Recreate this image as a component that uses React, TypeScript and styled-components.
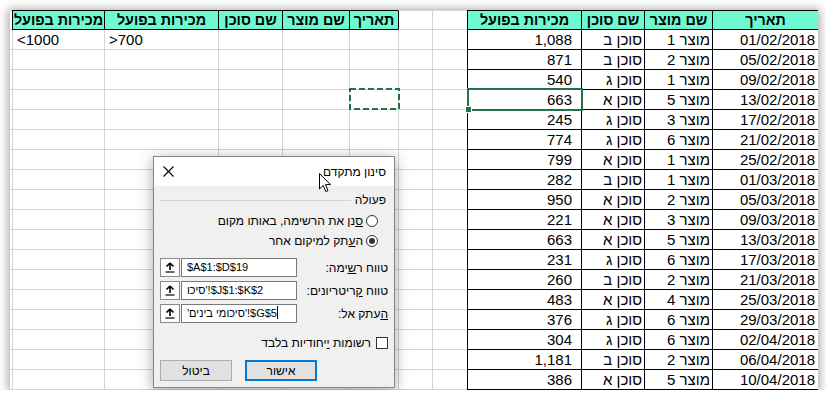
import React from 'react'
import styled, { createGlobalStyle, css } from 'styled-components'

const GlobalStyle = createGlobalStyle`
  html, body {
    margin: 0;
    padding: 0;
    background: #ffffff;
  }
  body {
    font-family: 'Liberation Sans', Arial, sans-serif;
    color: #000;
  }
`

const GRID = '#d4d4d4'
const INK = '#000000'
const MINT = '#6ff9d1'
const EXCEL_GREEN = '#217346'

// columns A..L, right to left (sheet is RTL)
const colWidths = [106, 68, 63, 114, 35, 34, 49, 67, 64, 114, 92, 2]

type Kind = 'head' | 'num' | 'text' | 'date' | 'crit' | 'empty'

interface CellSpec {
  value: string
  kind: Kind
  left?: string
  top?: string
  bottom: string
  selected?: boolean
  copyTarget?: boolean
}

const salesRows: [string, string, string, string][] = [
  ['01/02/2018', 'מוצר 1', 'סוכן ב', '1,088'],
  ['05/02/2018', 'מוצר 2', 'סוכן ב', '871'],
  ['09/02/2018', 'מוצר 1', 'סוכן ג', '540'],
  ['13/02/2018', 'מוצר 5', 'סוכן א', '663'],
  ['17/02/2018', 'מוצר 3', 'סוכן ג', '245'],
  ['21/02/2018', 'מוצר 6', 'סוכן ג', '774'],
  ['25/02/2018', 'מוצר 1', 'סוכן א', '799'],
  ['01/03/2018', 'מוצר 1', 'סוכן ב', '282'],
  ['05/03/2018', 'מוצר 2', 'סוכן א', '950'],
  ['09/03/2018', 'מוצר 3', 'סוכן א', '221'],
  ['13/03/2018', 'מוצר 5', 'סוכן א', '663'],
  ['17/03/2018', 'מוצר 6', 'סוכן ג', '231'],
  ['21/03/2018', 'מוצר 2', 'סוכן ב', '260'],
  ['25/03/2018', 'מוצר 4', 'סוכן א', '483'],
  ['29/03/2018', 'מוצר 6', 'סוכן ג', '376'],
  ['02/04/2018', 'מוצר 6', 'סוכן ג', '304'],
  ['06/04/2018', 'מוצר 2', 'סוכן ב', '1,181'],
  ['10/04/2018', 'מוצר 5', 'סוכן א', '386']
]

const headerRow = ['תאריך', 'שם מוצר', 'שם סוכן', 'מכירות בפועל', '', '', 'תאריך', 'שם מוצר', 'שם סוכן', 'מכירות בפועל', 'מכירות בפועל', '']

const buildCells = (): CellSpec[] => {
  const cells: CellSpec[] = []
  const rowCount = salesRows.length + 1
  for (let r = 0; r < rowCount; r++) {
    for (let c = 0; c < colWidths.length; c++) {
      const inData = c <= 3
      const inCriteriaHead = r === 0 && c >= 6 && c <= 10
      const boxed = inData || inCriteriaHead
      const cell: CellSpec = {
        value: '',
        kind: 'empty',
        left: c === 11 ? undefined : boxed ? INK : GRID,
        bottom: boxed ? INK : GRID,
        top: r === 0 ? (boxed ? INK : GRID) : undefined
      }
      if (r === 0) {
        cell.value = headerRow[c]
        if (boxed) cell.kind = 'head'
        if (c === 5) cell.left = INK
      } else if (inData) {
        const row = salesRows[r - 1]
        cell.value = row[c]
        cell.kind = c === 0 ? 'date' : c === 3 ? 'num' : 'text'
      } else if (r === 1 && (c === 9 || c === 10)) {
        cell.value = c === 9 ? '>700' : '<1000'
        cell.kind = 'crit'
      }
      if (r === 4 && c === 3) cell.selected = true
      if (r === 4 && c === 6) cell.copyTarget = true
      cells.push(cell)
    }
  }
  return cells
}

const App = () => {
  const cells = buildCells()
  return (
    <>
      <GlobalStyle />
      <Frame>
        <Sheet>
          {cells.map((cell, i) => (
            <Cell
              key={i}
              $kind={cell.kind}
              $left={cell.left}
              $top={cell.top}
              $bottom={cell.bottom}
              $selected={cell.selected}
            >
              {cell.value}
              {cell.copyTarget && (
                <MarchingAnts width="51" height="22" viewBox="0 0 51 22">
                  <rect x="1" y="1" width="49" height="20" fill="none" stroke={EXCEL_GREEN} strokeWidth="2" strokeDasharray="6 3" />
                </MarchingAnts>
              )}
            </Cell>
          ))}
        </Sheet>
        <AdvancedFilterDialog />
      </Frame>
    </>
  )
}

const AdvancedFilterDialog = () => (
  <Dialog>
    <TitleBar>
      <Title>סינון מתקדם</Title>
      <svg width="11" height="11" viewBox="0 0 11 11">
        <path d="M0.5 0.5 L10.5 10.5 M10.5 0.5 L0.5 10.5" stroke="#000" strokeWidth="1.1" />
      </svg>
    </TitleBar>
    <Pointer width="13" height="20" viewBox="0 0 13 20">
      <path d="M0.5 0.5 L0.5 16 L4.2 12.4 L6.8 18.6 L9 17.6 L6.5 11.6 L11.5 11.6 Z" fill="#fff" stroke="#000" strokeWidth="1" strokeLinejoin="round" />
    </Pointer>
    <DialogBody>
      <GroupHeader>
        <span>פעולה</span>
        <GroupRule />
      </GroupHeader>
      <RadioGroup>
        <RadioRow>
          <Radio />
          <span>
            <u>ס</u>נן את הרשימה, באותו מקום
          </span>
        </RadioRow>
        <RadioRow>
          <Radio $checked />
          <span>
            ה<u>ע</u>תק למיקום אחר
          </span>
        </RadioRow>
      </RadioGroup>
      <Fields>
        <FieldRow>
          <span>
            טווח ר<u>ש</u>ימה:
          </span>
          <RefEdit value="$A$1:$D$19" />
        </FieldRow>
        <FieldRow>
          <span>
            טווח <u>ק</u>ריטריונים:
          </span>
          <RefEdit value="סיכו'!$J$1:$K$2" />
        </FieldRow>
        <FieldRow>
          <span>
            <u>ה</u>עתק אל:
          </span>
          <RefEdit value="'סיכומי בינים'!$G$5" caret />
        </FieldRow>
      </Fields>
      <CheckRow>
        <CheckBox />
        <span>
          רשומות <u>י</u>יחודיות בלבד
        </span>
      </CheckRow>
      <ButtonRow>
        <DialogButton $primary>אישור</DialogButton>
        <DialogButton>ביטול</DialogButton>
      </ButtonRow>
    </DialogBody>
  </Dialog>
)

const RefEdit = ({ value, caret }: { value: string; caret?: boolean }) => (
  <RefBox>
    <CollapseButton>
      <svg width="10" height="11" viewBox="0 0 10 11">
        <path d="M5 1 L1.5 4.5 M5 1 L8.5 4.5 M5 1 L5 8" stroke="#000" strokeWidth="1.6" fill="none" />
        <path d="M0.5 10 L9.5 10" stroke="#000" strokeWidth="1.2" />
      </svg>
    </CollapseButton>
    <RefInput>
      {value}
      {caret && <Caret />}
    </RefInput>
  </RefBox>
)

const Frame = styled.div`
  position: relative;
  margin: 10px 0 0 10px;
  width: 808px;
  height: 380px;
  background: #fff;
  box-shadow: 0 1px 9px 2px rgba(0, 0, 0, 0.34);
`

const Sheet = styled.div`
  direction: rtl;
  display: grid;
  grid-template-columns: ${colWidths.map((w) => `${w}px`).join(' ')};
  grid-auto-rows: 20px;
  overflow: hidden;
  width: 808px;
  height: 380px;
`

const Cell = styled.div<{ $kind: Kind; $left?: string; $top?: string; $bottom: string; $selected?: boolean }>`
  position: relative;
  box-sizing: border-box;
  height: 20px;
  border-bottom: 1px solid ${({ $bottom }) => $bottom};
  border-left: ${({ $left }) => ($left ? `1px solid ${$left}` : 'none')};
  border-top: ${({ $top }) => ($top ? `1px solid ${$top}` : 'none')};
  font-size: 15px;
  line-height: 19px;
  white-space: nowrap;
  overflow: visible;
  text-align: right;
  padding: 0 2px;

  ${({ $kind }) =>
    $kind === 'head' &&
    css`
      background: ${MINT};
      font-weight: bold;
      font-size: 14.3px;
      text-align: center;
      padding: 0;
      overflow: hidden;
      line-height: 18px;
    `}
  ${({ $kind }) =>
    $kind === 'num' &&
    css`
      padding-right: 9px;
    `}
  ${({ $kind }) =>
    $kind === 'date' &&
    css`
      padding-right: 3px;
    `}
  ${({ $kind }) =>
    $kind === 'crit' &&
    css`
      direction: ltr;
      text-align: left;
      padding-left: 4px;
    `}
  ${({ $selected }) =>
    $selected &&
    css`
      z-index: 2;
      &::after {
        content: '';
        position: absolute;
        top: -2px;
        bottom: -2px;
        left: -1px;
        right: -2px;
        border: 2px solid ${EXCEL_GREEN};
      }
      &::before {
        content: '';
        position: absolute;
        left: -3px;
        bottom: -4px;
        width: 5px;
        height: 5px;
        background: ${EXCEL_GREEN};
        border: 1px solid #fff;
        z-index: 1;
      }
    `}
`

const MarchingAnts = styled.svg`
  position: absolute;
  top: -2px;
  left: -1px;
  z-index: 2;
`

const Dialog = styled.div`
  position: absolute;
  left: 143px;
  top: 146px;
  width: 242px;
  height: 232px;
  box-sizing: border-box;
  direction: rtl;
  display: flex;
  flex-direction: column;
  background: #f0f0f0;
  border: 1px solid #868686;
  box-shadow: 0 3px 14px rgba(0, 0, 0, 0.35);
  font-family: 'Liberation Sans', Arial, sans-serif;
  font-size: 12px;
  z-index: 5;
`

const TitleBar = styled.div`
  height: 29px;
  flex-shrink: 0;
  display: flex;
  align-items: center;
  justify-content: space-between;
  padding: 0 8px 0 9px;
  background: #ffffff;
`

const Title = styled.span`
  font-size: 12px;
`

const Pointer = styled.svg`
  position: absolute;
  left: 165px;
  top: 16px;
`

const DialogBody = styled.div`
  display: flex;
  flex-direction: column;
  padding: 7px 0 0;
`

const GroupHeader = styled.div`
  display: flex;
  align-items: center;
  height: 14px;
  padding: 0 8px 0 6px;
  gap: 4px;
`

const GroupRule = styled.div`
  flex: 1;
  height: 1px;
  background: #d5d5d5;
`

const RadioGroup = styled.div`
  display: flex;
  flex-direction: column;
  margin-top: 4px;
`

const RadioRow = styled.div`
  display: flex;
  align-items: center;
  gap: 3px;
  height: 20px;
  padding-right: 16px;
`

const Radio = styled.span<{ $checked?: boolean }>`
  box-sizing: border-box;
  width: 12px;
  height: 12px;
  border-radius: 50%;
  border: 1px solid #333;
  background: #fff;
  display: flex;
  align-items: center;
  justify-content: center;

  &::after {
    content: '';
    width: 6px;
    height: 6px;
    border-radius: 50%;
    background: ${({ $checked }) => ($checked ? '#333' : 'transparent')};
  }
`

const Fields = styled.div`
  display: flex;
  flex-direction: column;
  gap: 4px;
  margin-top: 7px;
`

const FieldRow = styled.div`
  display: flex;
  align-items: center;
  justify-content: space-between;
  height: 19px;
  padding: 0 6px;
`

const RefBox = styled.div`
  direction: ltr;
  display: flex;
  gap: 1px;
  width: 137px;
  height: 19px;
`

const CollapseButton = styled.div`
  box-sizing: border-box;
  width: 20px;
  height: 19px;
  border: 1px solid #8a8a8a;
  background: #fdfdfd;
  display: flex;
  align-items: center;
  justify-content: center;
`

const RefInput = styled.div`
  box-sizing: border-box;
  flex: 1;
  height: 19px;
  border: 1px solid #7a7a7a;
  background: #fff;
  font-size: 11px;
  line-height: 17px;
  padding-left: 5px;
  white-space: nowrap;
  overflow: hidden;
`

const Caret = styled.span`
  display: inline-block;
  width: 1px;
  height: 13px;
  background: #000;
  vertical-align: -2px;
`

const CheckRow = styled.div`
  display: flex;
  align-items: center;
  gap: 5px;
  height: 14px;
  margin-top: 13px;
  padding-right: 6px;
`

const CheckBox = styled.span`
  box-sizing: border-box;
  width: 12px;
  height: 12px;
  border: 1px solid #333;
  background: #fff;
`

const ButtonRow = styled.div`
  display: flex;
  justify-content: flex-end;
  gap: 13px;
  margin-top: 10px;
  padding-left: 6px;
`

const DialogButton = styled.div<{ $primary?: boolean }>`
  box-sizing: border-box;
  width: 72px;
  height: 21px;
  display: flex;
  align-items: center;
  justify-content: center;
  background: #e1e1e1;
  border: ${({ $primary }) => ($primary ? '2px solid #0078d7' : '1px solid #adadad')};
  font-size: 12px;
`

export default App
